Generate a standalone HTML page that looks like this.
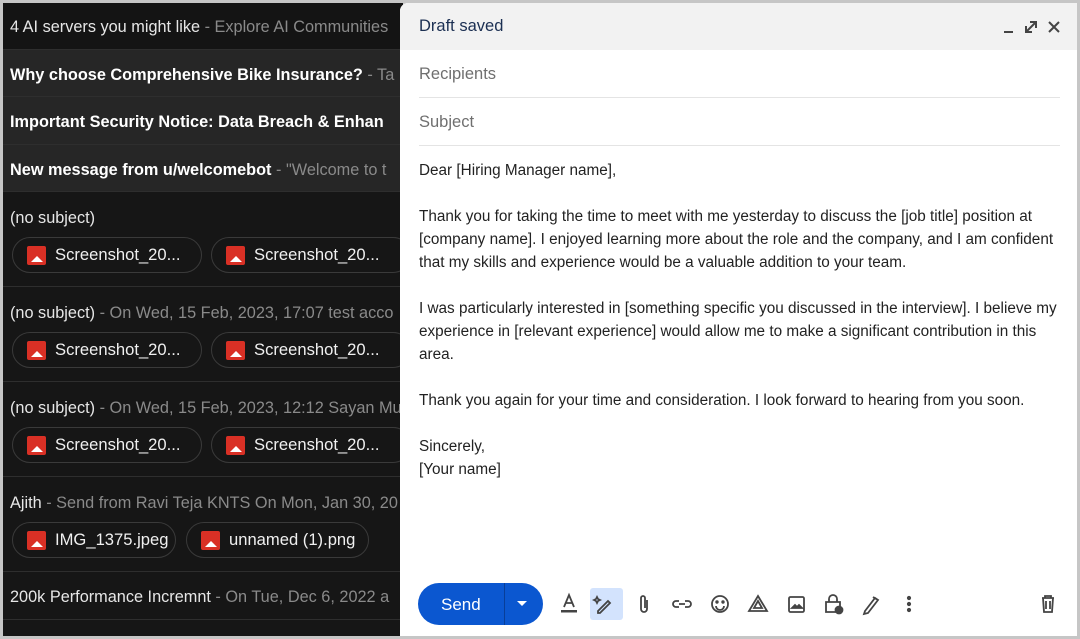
<!DOCTYPE html>
<html><head><style>
*{margin:0;padding:0;box-sizing:border-box}
body{width:1080px;height:639px;background:#c6c6c6;font-family:"Liberation Sans",sans-serif;position:relative;overflow:hidden}
#left{position:absolute;left:3px;top:3px;width:400px;height:633px;background:#161616;overflow:hidden}
.row{position:absolute;left:0;width:400px;border-bottom:1px solid #2e2e2e;white-space:nowrap;overflow:hidden}
.t{position:absolute;left:7px;font-size:16.3px;color:#e6e6e6}
.t b{color:#fff}
.t span{color:#8a8a8a}
.chip{position:absolute;height:36px;border:1px solid #3a3a3a;border-radius:18px;color:#f0f0f0;font-size:16.6px;line-height:34px;padding-left:42px;white-space:nowrap}
.chip:before{content:"";position:absolute;left:14px;top:8px;width:19px;height:19px;background:#d93025;border-radius:2px}
.chip:after{content:"";position:absolute;left:18px;top:18px;width:0;height:0;border-left:6px solid transparent;border-right:6px solid transparent;border-bottom:6px solid #fff}
#comp{position:absolute;left:400px;top:3px;width:677px;height:633px;background:#fff;border-top-left-radius:8px;overflow:hidden}
#hdr{height:47px;background:#f2f2f2;font-size:16.5px;color:#1b2f52;padding:14px 0 0 19px}
.fld{position:absolute;left:19px;width:641px;height:48px;border-bottom:1px solid #e4e4e4;font-size:16.5px;color:#6f6f6f;padding-top:15px}
#body{position:absolute;left:19px;top:156px;width:648px;font-size:15.3px;line-height:23px;color:#222}
#body p{margin-bottom:23px}
#send{position:absolute;left:18px;top:580px;width:125px;height:42px;background:#0b57d0;border-radius:21px;color:#fff;font-size:17px}
#send .s{position:absolute;left:23px;top:12px}
#send .d{position:absolute;left:86px;top:0;width:1px;height:42px;background:#083e99}
#send .a{position:absolute;left:99px;top:18px;border-left:5px solid transparent;border-right:5px solid transparent;border-top:5px solid #fff}
</style></head><body>
<div id="left">
 <div class="row" style="top:0;height:47px;background:#141414"><div class="t" style="top:15px">4 AI servers you might like <span>- Explore AI Communities</span></div></div>
 <div class="row" style="top:47px;height:47px;background:#262626"><div class="t" style="top:16px"><b>Why choose Comprehensive Bike Insurance?</b> <span>- Ta</span></div></div>
 <div class="row" style="top:94px;height:48px;background:#262626"><div class="t" style="top:16px"><b>Important Security Notice: Data Breach &amp; Enhan</b></div></div>
 <div class="row" style="top:142px;height:47px;background:#262626"><div class="t" style="top:16px"><b>New message from u/welcomebot</b> <span>- "Welcome to t</span></div></div>
 <div class="row" style="top:189px;height:95px">
  <div class="t" style="top:17px">(no subject)</div>
  <div class="chip" style="left:9px;top:45px;width:190px">Screenshot_20...</div>
  <div class="chip" style="left:208px;top:45px;width:200px">Screenshot_20...</div>
 </div>
 <div class="row" style="top:284px;height:95px">
  <div class="t" style="top:17px">(no subject) <span>- On Wed, 15 Feb, 2023, 17:07 test acco</span></div>
  <div class="chip" style="left:9px;top:45px;width:190px">Screenshot_20...</div>
  <div class="chip" style="left:208px;top:45px;width:200px">Screenshot_20...</div>
 </div>
 <div class="row" style="top:379px;height:95px">
  <div class="t" style="top:17px">(no subject) <span>- On Wed, 15 Feb, 2023, 12:12 Sayan Mu</span></div>
  <div class="chip" style="left:9px;top:45px;width:190px">Screenshot_20...</div>
  <div class="chip" style="left:208px;top:45px;width:200px">Screenshot_20...</div>
 </div>
 <div class="row" style="top:474px;height:95px">
  <div class="t" style="top:17px">Ajith <span>- Send from Ravi Teja KNTS On Mon, Jan 30, 20</span></div>
  <div class="chip" style="left:9px;top:45px;width:164px">IMG_1375.jpeg</div>
  <div class="chip" style="left:183px;top:45px;width:183px">unnamed (1).png</div>
 </div>
 <div class="row" style="top:569px;height:48px"><div class="t" style="top:16px">200k Performance Incremnt <span>- On Tue, Dec 6, 2022 a</span></div></div>
</div>
<div id="comp">
 <div id="hdr">Draft saved
  <svg style="position:absolute;left:600px;top:15px" width="62" height="18" viewBox="0 0 62 18" fill="none" stroke="#444" stroke-width="2">
   <path d="M4 14h9"/><path d="M26 14l10-10M30 4h6v6M26 8v6h6"/><path d="M49 4l10 10M59 4l-10 10"/>
  </svg>
 </div>
 <div class="fld" style="top:47px">Recipients</div>
 <div class="fld" style="top:95px">Subject</div>
 <div id="body">
  <p>Dear [Hiring Manager name],</p>
  <p>Thank you for taking the time to meet with me yesterday to discuss the [job title] position at [company name]. I enjoyed learning more about the role and the company, and I am confident that my skills and experience would be a valuable addition to your team.</p>
  <p>I was particularly interested in [something specific you discussed in the interview]. I believe my experience in [relevant experience] would allow me to make a significant contribution in this area.</p>
  <p>Thank you again for your time and consideration. I look forward to hearing from you soon.</p>
  <p>Sincerely,<br>[Your name]</p>
 </div>
 <div id="send"><span class="s">Send</span><span class="d"></span><span class="a"></span></div>
 <div style="position:absolute;left:190px;top:585px;width:33px;height:32px;background:#d3e3fd;border-radius:3px"></div>
 <svg style="position:absolute;left:155px;top:588px" width="520" height="26" viewBox="0 0 520 26" fill="none" stroke="#444" stroke-width="1.8">
  <path d="M9 16l5-12 5 12M11 12h6"/><rect x="6" y="19" width="16" height="2.5" fill="#444" stroke="none"/>
  <path d="M43 20l10-10 2 2-10 10h-2zM42 6l1 2 2 1-2 1-1 2-1-2-2-1 2-1z"/>
  <path d="M92 9v9a3 3 0 0 1-6 0V7a2 2 0 0 1 4 0v10"/>
  <path d="M124 10h-3a3 3 0 0 0 0 6h3M130 10h3a3 3 0 0 1 0 6h-3M124 13h6"/>
  <circle cx="165" cy="13" r="8"/><circle cx="162" cy="11" r=".8" fill="#444"/><circle cx="168" cy="11" r=".8" fill="#444"/><path d="M161 15a4 4 0 0 0 8 0"/>
  <path d="M203 5l9 15h-18z M203 10l4 7h-8z"/>
  <rect x="234" y="6" width="15" height="15" rx="1.5"/><path d="M237 17l3-3 2 2 2-2 3 3z" fill="#444"/>
  <path d="M274 11v-3a4 4 0 0 1 8 0v3M271 11h14v10h-14z"/><circle cx="284" cy="19" r="3.5" fill="#444"/>
  <path d="M310 20l10-13 3 2-10 13-4 1zM318 6l3 2"/>
  <circle cx="354" cy="7" r="1.2" fill="#444"/><circle cx="354" cy="13" r="1.2" fill="#444"/><circle cx="354" cy="19" r="1.2" fill="#444"/>
  <path d="M487 7h12M490 7V5h6v2M488 7l1 14h8l1-14M491 10v8M495 10v8"/>
 </svg>
</div>
</body></html>
